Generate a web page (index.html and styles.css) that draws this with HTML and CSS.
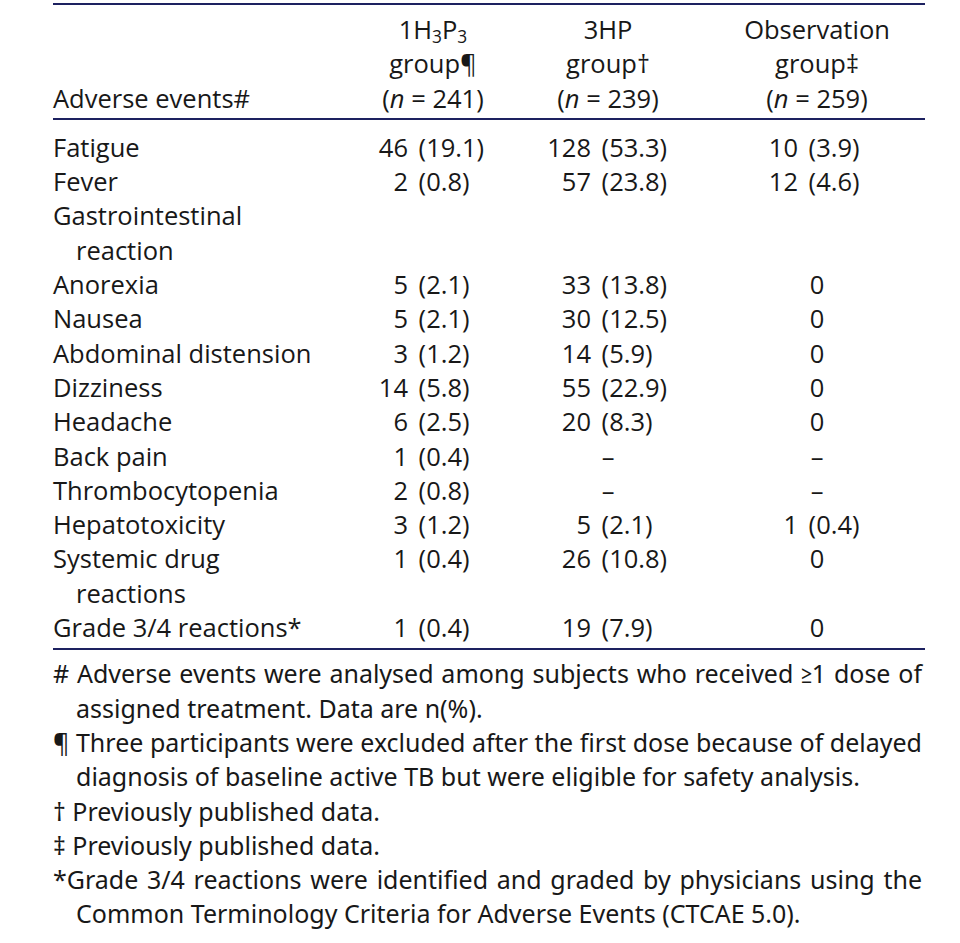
FILE: index.html
```html
<!DOCTYPE html>
<html lang="en">
<head>
<meta charset="utf-8">
<title>Adverse events</title>
<link rel="stylesheet" href="styles.css">
</head>
<body>
<div class="page">
  <table class="ae">
    <colgroup>
      <col class="col-label">
      <col class="col-1">
      <col class="col-2">
      <col class="col-3">
    </colgroup>
    <thead>
      <tr>
        <th class="lab">Adverse events#</th>
        <th class="c1">1H<sub>3</sub>P<sub>3</sub><br>group¶<br>(<i>n</i> = 241)</th>
        <th class="c2">3HP<br>group†<br>(<i>n</i> = 239)</th>
        <th class="c3">Observation<br>group‡<br>(<i>n</i> = 259)</th>
      </tr>
    </thead>
    <tbody>
      <tr class="first">
        <td class="lab">Fatigue</td>
        <td class="c1"><span class="n">46</span> (19.1)</td>
        <td class="c2"><span class="n">128</span> (53.3)</td>
        <td class="c3"><span class="n">10</span> (3.9)</td>
      </tr>
      <tr>
        <td class="lab">Fever</td>
        <td class="c1"><span class="n">2</span> (0.8)</td>
        <td class="c2"><span class="n">57</span> (23.8)</td>
        <td class="c3"><span class="n">12</span> (4.6)</td>
      </tr>
      <tr>
        <td class="lab">Gastrointestinal<br>reaction</td>
        <td class="c1"></td>
        <td class="c2"></td>
        <td class="c3"></td>
      </tr>
      <tr>
        <td class="lab">Anorexia</td>
        <td class="c1"><span class="n">5</span> (2.1)</td>
        <td class="c2"><span class="n">33</span> (13.8)</td>
        <td class="c3 ctr">0</td>
      </tr>
      <tr>
        <td class="lab">Nausea</td>
        <td class="c1"><span class="n">5</span> (2.1)</td>
        <td class="c2"><span class="n">30</span> (12.5)</td>
        <td class="c3 ctr">0</td>
      </tr>
      <tr>
        <td class="lab">Abdominal distension</td>
        <td class="c1"><span class="n">3</span> (1.2)</td>
        <td class="c2"><span class="n">14</span> (5.9)</td>
        <td class="c3 ctr">0</td>
      </tr>
      <tr>
        <td class="lab">Dizziness</td>
        <td class="c1"><span class="n">14</span> (5.8)</td>
        <td class="c2"><span class="n">55</span> (22.9)</td>
        <td class="c3 ctr">0</td>
      </tr>
      <tr>
        <td class="lab">Headache</td>
        <td class="c1"><span class="n">6</span> (2.5)</td>
        <td class="c2"><span class="n">20</span> (8.3)</td>
        <td class="c3 ctr">0</td>
      </tr>
      <tr>
        <td class="lab">Back pain</td>
        <td class="c1"><span class="n">1</span> (0.4)</td>
        <td class="c2 ctr">–</td>
        <td class="c3 ctr">–</td>
      </tr>
      <tr>
        <td class="lab">Thrombocytopenia</td>
        <td class="c1"><span class="n">2</span> (0.8)</td>
        <td class="c2 ctr">–</td>
        <td class="c3 ctr">–</td>
      </tr>
      <tr>
        <td class="lab">Hepatotoxicity</td>
        <td class="c1"><span class="n">3</span> (1.2)</td>
        <td class="c2"><span class="n">5</span> (2.1)</td>
        <td class="c3"><span class="n">1</span> (0.4)</td>
      </tr>
      <tr>
        <td class="lab">Systemic drug<br>reactions</td>
        <td class="c1"><span class="n">1</span> (0.4)</td>
        <td class="c2"><span class="n">26</span> (10.8)</td>
        <td class="c3 ctr">0</td>
      </tr>
      <tr class="last">
        <td class="lab">Grade 3/4 reactions*</td>
        <td class="c1"><span class="n">1</span> (0.4)</td>
        <td class="c2"><span class="n">19</span> (7.9)</td>
        <td class="c3 ctr">0</td>
      </tr>
    </tbody>
  </table>
  <div class="notes">
    <p><span class="ln jl"># Adverse events were analysed among subjects who received <span class="ge">≥</span>1 dose of</span><span class="ln">assigned treatment. Data are n(%).</span></p>
    <p><span class="ln jl">¶ Three participants were excluded after the first dose because of delayed</span><span class="ln">diagnosis of baseline active TB but were eligible for safety analysis.</span></p>
    <p><span class="ln">† Previously published data.</span></p>
    <p><span class="ln">‡ Previously published data.</span></p>
    <p><span class="ln jl">*Grade 3/4 reactions were identified and graded by physicians using the</span><span class="ln">Common Terminology Criteria for Adverse Events (CTCAE 5.0).</span></p>
  </div>
</div>
</body>
</html>
```
FILE: styles.css
```css
html, body {
  margin: 0;
  padding: 0;
  background: #ffffff;
}

.page {
  width: 960px;
  height: 943px;
  box-sizing: border-box;
  padding: 3px 0 0 53px;
  color: #181818;
  font-family: "Open Sans", "Noto Sans", sans-serif;
  font-size: 25.5px;
  line-height: 34.3px;
}

.ae {
  width: 872px;
  border-collapse: collapse;
  table-layout: fixed;
}

.col-label { width: 297px; }
.col-1 { width: 166px; }
.col-2 { width: 184px; }
.col-3 { width: 225px; }

.ae th,
.ae td {
  padding: 0;
  font-weight: 400;
  white-space: nowrap;
}

.ae thead th {
  border-top: 2px solid #1d2160;
  border-bottom: 2px solid #1d2160;
  padding-top: 7px;
  padding-bottom: 3px;
  text-align: center;
  vertical-align: bottom;
}

.ae thead th.lab {
  text-align: left;
}

.ae thead th.c3 {
  padding-left: 9px;
}

.ae sub {
  font-size: 0.68em;
  line-height: 0;
  vertical-align: -0.22em;
}

.ae i {
  font-style: italic;
}

.ae td {
  vertical-align: top;
  text-align: left;
}

.ae td.lab {
  padding-left: 23px;
  text-indent: -23px;
}

.ae tbody tr.first td {
  padding-top: 10px;
}

.ae tbody tr.last td {
  padding-bottom: 4px;
  border-bottom: 2px solid #1d2160;
}

.ae .n {
  display: inline-block;
  text-align: right;
  margin-right: 4px;
}

.ae td.c1 .n { width: 58px; }
.ae td.c2 .n { width: 75px; }
.ae td.c3 .n { width: 98px; }

.ae td.ctr {
  text-align: center;
}

.ae td.c3.ctr {
  padding-left: 9px;
}

.notes {
  width: 869px;
  margin-top: 6px;
  font-family: "Noto Sans", "Open Sans", sans-serif;
  font-stretch: 87.5%;
  font-size: 25px;
}

.notes p {
  margin: 0;
}

.notes .ln {
  display: block;
  white-space: nowrap;
  padding-left: 23px;
}

.notes .ln:first-child {
  padding-left: 0;
}

.notes .jl {
  text-align: justify;
  text-align-last: justify;
}

.notes .ge {
  text-decoration: none;
}
```
